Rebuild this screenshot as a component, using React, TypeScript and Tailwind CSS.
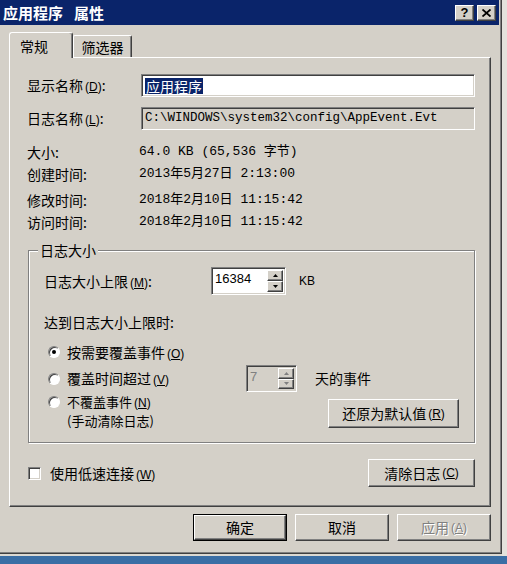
import React from "react";

const CJK = "font-['Noto_Sans_CJK_SC','Noto_Sans',sans-serif]";
const MONO = "font-['Liberation_Mono','Noto_Sans_CJK_SC',monospace]";
const RAISED =
  "border border-t-white border-l-white border-r-[#404040] border-b-[#404040] shadow-[inset_-1px_-1px_0_#808080]";
const SUNKEN =
  "border border-t-[#808080] border-l-[#808080] border-r-white border-b-white shadow-[inset_1px_1px_0_#404040,inset_-1px_-1px_0_#d4d0c8]";

function Key({ k }: { k: string }) {
  return (
    <span className="ml-[2px] font-['Liberation_Sans',sans-serif] text-[12px]">
      (<span className="underline">{k}</span>)
    </span>
  );
}

function Arrow({ up, dim }: { up?: boolean; dim?: boolean }) {
  return (
    <svg width="5" height="3" viewBox="0 0 5 3">
      <path d={up ? "M2.5 0 L5 3 L0 3 Z" : "M0 0 L5 0 L2.5 3 Z"} fill={dim ? "#808080" : "#000"} />
    </svg>
  );
}

function Spin({ value, disabled, className }: { value: string; disabled?: boolean; className: string }) {
  return (
    <div className={`flex h-full ${SUNKEN} ${disabled ? "bg-[#d4d0c8]" : "bg-white"} ${className}`}>
      <div
        className={`flex-1 pl-[3px] pt-[3px] font-['Liberation_Sans',sans-serif] text-[13px] leading-[16px] ${
          disabled ? "text-[#808080]" : "text-black"
        }`}
      >
        {value}
      </div>
      <div className="flex w-[18px] flex-col py-[2px] pr-[2px]">
        <div className={`flex flex-1 items-center justify-center bg-[#d4d0c8] ${RAISED}`}>
          <Arrow up dim={disabled} />
        </div>
        <div className={`flex flex-1 items-center justify-center bg-[#d4d0c8] ${RAISED}`}>
          <Arrow dim={disabled} />
        </div>
      </div>
    </div>
  );
}

function Radio({ checked }: { checked?: boolean }) {
  return (
    <div className="flex h-[12px] w-[12px] shrink-0 items-center justify-center rounded-full bg-white border border-t-[#808080] border-l-[#808080] border-r-white border-b-white shadow-[inset_1px_1px_0_#404040,1px_1px_0_#d4d0c8]">
      {checked && <div className="h-[4px] w-[4px] rounded-full bg-black" />}
    </div>
  );
}

function Button({
  children,
  className,
  isDefault,
  disabled,
}: {
  children: React.ReactNode;
  className: string;
  isDefault?: boolean;
  disabled?: boolean;
}) {
  const inner = (
    <div
      className={`flex h-full w-full items-center justify-center bg-[#d4d0c8] ${RAISED} ${
        disabled ? "text-[#808080] [text-shadow:1px_1px_0_#fff]" : "text-black"
      }`}
    >
      {children}
    </div>
  );
  if (isDefault) return <div className={`border border-black ${className}`}>{inner}</div>;
  return <div className={className}>{inner}</div>;
}

const info = [
  ["大小:", "64.0 KB (65,536 字节)"],
  ["创建时间:", "2013年5月27日 2:13:00"],
  ["修改时间:", "2018年2月10日 11:15:42"],
  ["访问时间:", "2018年2月10日 11:15:42"],
];

export default function App() {
  return (
    <div className={`flex h-[564px] w-[507px] flex-col overflow-hidden bg-[#dcd9d2] text-[14px] text-black ${CJK}`}>
      <div className="flex h-[556px]">
        <div className="flex h-[554px] w-[502px] flex-col bg-[#d4d0c8] border-r border-b border-[#404040] shadow-[inset_-1px_-1px_0_#808080]">
          {/* title bar */}
          <div className="flex h-[25px] w-[499px] items-center justify-between bg-[#0a246a] pl-[3px] pr-[3px]">
            <div className="flex gap-[11px] text-[15px] font-bold leading-none text-white">
              <span>应用程序</span>
              <span>属性</span>
            </div>
            <div className="flex gap-[3px]">
              <div className={`flex h-[16px] w-[19px] items-center justify-center bg-[#d4d0c8] ${RAISED}`}>
                <span className="font-['Liberation_Sans',sans-serif] text-[13px] font-bold leading-none">?</span>
              </div>
              <div className={`flex h-[16px] w-[19px] items-center justify-center bg-[#d4d0c8] ${RAISED}`}>
                <svg width="9" height="8" viewBox="0 0 9 8">
                  <path d="M0.5 0.5 L8.5 7.5 M8.5 0.5 L0.5 7.5" stroke="#000" strokeWidth="1.8" />
                </svg>
              </div>
            </div>
          </div>

          {/* tabs */}
          <div className="relative z-10 ml-[9px] mt-[7px] flex h-[26px] items-end">
            <div className="flex h-[26px] w-[64px] items-start rounded-t-[3px] bg-[#d4d0c8] pl-[10px] pt-[3px] border-l border-t border-white border-r border-r-[#404040] shadow-[inset_-1px_0_0_#808080]">
              <span className="leading-[20px]">常规</span>
            </div>
            <div className="mb-[1px] flex h-[22px] w-[59px] items-center justify-center rounded-t-[2px] border-l border-t border-white border-r border-r-[#404040] shadow-[inset_-1px_0_0_#808080]">
              <span className="leading-[20px]">筛选器</span>
            </div>
          </div>

          {/* panel */}
          <div
            className={`-mt-[1px] ml-[9px] flex h-[450px] w-[482px] flex-col pl-[17px] pr-[15px] pt-[16px] bg-[#d4d0c8] ${RAISED}`}
          >
            <div className="flex h-[23px] items-center">
              <div className="w-[114px]">
                显示名称<Key k="D" />:
              </div>
              <div className={`flex h-[23px] flex-1 items-center bg-white pl-[3px] ${SUNKEN}`}>
                <span className="bg-[#0a246a] px-[1px] leading-[16px] text-white">应用程序</span>
              </div>
            </div>
            <div className="mt-[10px] flex h-[23px] items-center">
              <div className="w-[114px]">
                日志名称<Key k="L" />:
              </div>
              <div className={`flex h-[23px] flex-1 items-center bg-[#d4d0c8] pl-[3px] ${SUNKEN}`}>
                <span className={`${MONO} text-[12.5px] leading-none`}>C:\WINDOWS\system32\config\AppEvent.Evt</span>
              </div>
            </div>

            <div className="mt-[11px] flex flex-col">
              {info.map(([k, v], i) => (
                <div key={k} className={`flex h-[22px] items-center ${i === 2 ? "mt-[4px]" : ""}`}>
                  <div className="w-[112px]">{k}</div>
                  <div className={`${MONO} text-[13px]`}>{v}</div>
                </div>
              ))}
            </div>

            {/* group box */}
            <div className="relative ml-[1px] mt-[17px] flex h-[193px] flex-col border border-[#808080] pl-[15px] pr-[15px] pt-[16px] shadow-[inset_1px_1px_0_#fff,1px_1px_0_#fff]">
              <div className="absolute left-[9px] top-[-10px] bg-[#d4d0c8] px-[2px] leading-[18px]">日志大小</div>
              <div className="flex h-[28px] items-center">
                <div className="w-[167px]">
                  日志大小上限<Key k="M" />:
                </div>
                <Spin value="16384" className="w-[75px]" />
                <div className="ml-[13px] font-['Liberation_Sans',sans-serif] text-[12px]">KB</div>
              </div>
              <div className="mt-[17px] flex h-[20px] items-center">达到日志大小上限时:</div>
              <div className="ml-[4px] mt-[10px] flex h-[20px] items-center gap-[7px]">
                <Radio checked />
                <span>
                  按需要覆盖事件<Key k="O" />
                </span>
              </div>
              <div className="ml-[4px] mt-[3px] flex h-[27px] items-center">
                <Radio />
                <span className="ml-[7px] w-[179px]">
                  覆盖时间超过<Key k="V" />
                </span>
                <Spin value="7" disabled className="w-[51px]" />
                <span className="ml-[18px]">天的事件</span>
              </div>
              <div className="ml-[4px] mt-[1px] flex justify-between">
                <div className="flex gap-[7px]">
                  <div className="mt-[3px]">
                    <Radio />
                  </div>
                  <div className="flex flex-col text-[13px] leading-[18px]">
                    <span>
                      不覆盖事件<Key k="N" />
                    </span>
                    <span>(手动清除日志)</span>
                  </div>
                </div>
                <Button className="mt-[6px] h-[29px] w-[131px]">
                  还原为默认值<Key k="R" />
                </Button>
              </div>
            </div>

            <div className="mt-[16px] flex h-[28px] items-center justify-between">
              <div className="ml-[1px] flex items-center gap-[9px]">
                <div className={`h-[13px] w-[13px] bg-white ${SUNKEN}`} />
                <span>
                  使用低速连接<Key k="W" />
                </span>
              </div>
              <Button className="h-[28px] w-[107px]">
                清除日志<Key k="C" />
              </Button>
            </div>
          </div>

          {/* dialog buttons */}
          <div className="mt-[7px] flex w-[499px] justify-end gap-[8px] pr-[8px]">
            <Button isDefault className="h-[27px] w-[94px]">
              确定
            </Button>
            <Button className="h-[27px] w-[94px]">取消</Button>
            <Button disabled className="h-[27px] w-[94px]">
              应用<Key k="A" />
            </Button>
          </div>
        </div>
        <div className="flex-1 bg-[#e4e2dc]" />
      </div>
      <div className="h-[8px] bg-[#3a6ea5]" />
    </div>
  );
}
